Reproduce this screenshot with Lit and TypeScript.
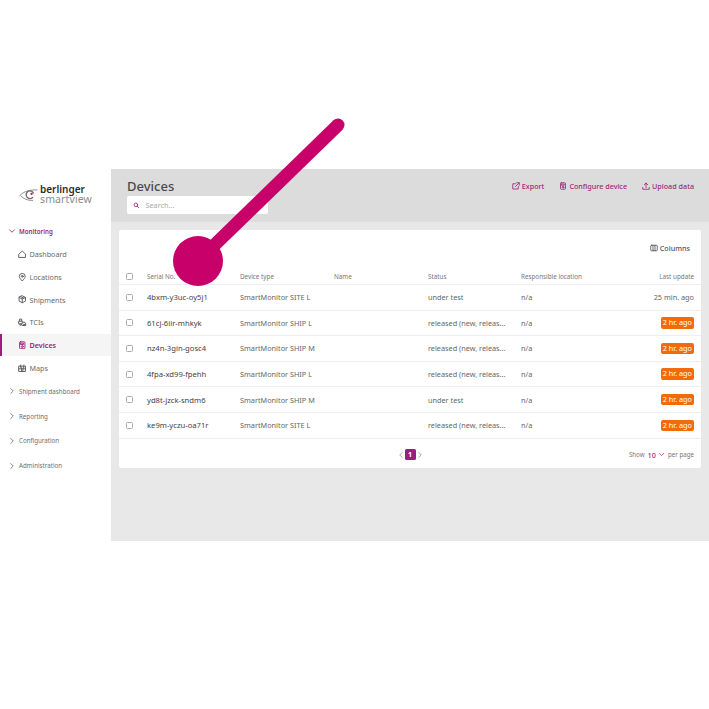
import { LitElement, html, css, svg } from "lit";
import { customElement } from "lit/decorators.js";

const ico = (p: unknown, s = 9, cls = "") => html`<svg class="ico ${cls}" width=${s} height=${s} viewBox="0 0 16 16" fill="none" stroke="currentColor" stroke-width="1.700" stroke-linecap="round" stroke-linejoin="round">${p}</svg>`;

const icons = {
  home: svg`<path d="M2 7.500 8 2l6 5.500V14H2z"/>`,
  pin: svg`<path d="M8 15C4.500 11 2.500 8.800 2.500 6.300a5.500 5.500 0 0 1 11 0C13.500 8.800 11.500 11 8 15z"/><circle cx="8" cy="6.300" r="1.800"/>`,
  box: svg`<path d="M8 1.500 14 4.500v7L8 14.500 2 11.500v-7zM2 4.500l6 3 6-3M8 7.500v7M5 3l6 3"/>`,
  tci: svg`<path d="M3 6V2h4v4M2 6h6v5H2zM9 8h4l1.500 3v3H8"/><circle cx="5" cy="12.500" r="1.500"/><circle cx="11.500" cy="13" r="1.500"/>`,
  device: svg`<rect x="3" y="1.500" width="10" height="13" rx="1.500"/><rect x="5.500" y="4" width="5" height="2.500"/><circle cx="8" cy="10.500" r="1.800"/>`,
  map: svg`<path d="M2 4h12v10H2zM5 2v4M11 2v4M2 9h12M6 6l1 8M10 6l-1 8"/>`,
  down: svg`<path d="M3 5.500 8 10.500l5-5"/>`,
  right: svg`<path d="M5.500 3 10.500 8l-5 5"/>`,
  left: svg`<path d="M10.500 3 5.500 8l5 5"/>`,
  search: svg`<circle cx="7" cy="7" r="4.500" stroke-width="2"/><path d="m10.500 10.500 3.500 3.500" stroke-width="2"/>`,
  export: svg`<path d="M12.500 9v5h-11V3.500H7M9.500 1.500h5v5M14.500 1.500 7 9"/>`,
  upload: svg`<path d="M8 11V2M4.500 5.500 8 2l3.500 3.500M1.500 11v3.500h13V11"/>`,
  columns: svg`<rect x="1.500" y="2.500" width="13" height="11" rx="1.500"/><path d="M6 2.500v11M10 2.500v11"/>`,
};

type Row = [string, string, string, boolean];
const rows: Row[] = [
  ["4bxm-y3uc-oy5j1", "SmartMonitor SITE L", "under test", false],
  ["61cj-6iir-mhkyk", "SmartMonitor SHIP L", "released (new, releas...", true],
  ["nz4n-3gin-gosc4", "SmartMonitor SHIP M", "released (new, releas...", true],
  ["4fpa-xd99-fpehh", "SmartMonitor SHIP L", "released (new, releas...", true],
  ["yd8t-jzck-sndm6", "SmartMonitor SHIP M", "under test", true],
  ["ke9m-yczu-oa71r", "SmartMonitor SITE L", "released (new, releas...", true],
];

const subItems: [string, unknown, boolean][] = [
  ["Dashboard", icons.home, false],
  ["Locations", icons.pin, false],
  ["Shipments", icons.box, false],
  ["TCIs", icons.tci, false],
  ["Devices", icons.device, true],
  ["Maps", icons.map, false],
];

@customElement("app-root")
export class AppRoot extends LitElement {
  static styles = css`
    :host { display: block; position: relative; width: 709px; height: 709px; overflow: hidden; background: #fff;
      font-family: "Noto Sans", "Open Sans", sans-serif; color: #666; font-size: 7.300px; }
    .ico { display: block; flex: none; }
    .shell { margin-top: 169px; height: 372px; display: flex; }
    .side { width: 111px; flex: none; background: #fff; display: flex; flex-direction: column; }
    .logo { height: 50px; box-sizing: border-box; display: flex; align-items: center; gap: 1px; padding: 1px 0 0 19px; }
    .logo-text { display: flex; flex-direction: column; line-height: 9.500px; }
    .logo-b { font-size: 10px; font-weight: 600; color: #2c2c2c; }
    .logo-s { font-size: 10.500px; color: #8c8c8c; letter-spacing: .12px; font-weight: 400; }
    nav { display: flex; flex-direction: column; }
    .group { height: 24.700px; display: flex; align-items: center; gap: 3px; padding-left: 8px; font-size: 6.200px; color: #6e6e6e; }
    .group.first { height: 24px; color: #a8206f; font-weight: 600; }
    .item { height: 22.700px; display: flex; align-items: center; gap: 3px; padding-left: 18px; font-size: 7.200px; color: #6a6a6a; box-sizing: border-box; }
    .item .ico { color: #555; }
    .item.on { background: #f5f5f5; color: #a01c78; font-weight: 600; border-left: 2px solid #a01c78; padding-left: 16px; }
    .item.on .ico { color: #a01c78; }
    main { flex: 1; min-width: 0; background: #e8e8e8; display: flex; flex-direction: column; }
    header { height: 53px; background: #dcdcdc; padding: 9px 15px 0 16px; display: flex; justify-content: space-between; box-sizing: border-box; }
    h1 { margin: 0; font-size: 13px; font-weight: 500; line-height: 17px; color: #4a4a4a; }
    .search { margin-top: 1px; width: 141px; height: 18px; background: #fff; border-radius: 2px; display: flex; align-items: center; gap: 6px; padding-left: 6px; box-sizing: border-box; color: #a8a8a8; font-size: 7.300px; }
    .search .ico { color: #a01c78; }
    .actions { display: flex; gap: 15px; height: 16px; align-items: center; color: #a0287c; font-size: 7.200px; font-weight: 500; }
    .act { display: flex; align-items: center; gap: 2px; }
    .card { margin: 8px 8px 0 8px; height: 238px; background: #fff; border-radius: 2px; display: flex; flex-direction: column; }
    .tools { height: 36px; display: flex; justify-content: flex-end; align-items: center; padding-right: 11px; color: #555; font-weight: 500; font-size: 7.200px; }
    .tools .in { display: flex; align-items: center; gap: 2px; height: 12px; }
    .head, .row { display: grid; grid-template-columns: 28px 93px 94px 94px 93px 100px 1fr; align-items: center; padding-right: 7px; }
    .head { height: 19px; padding-top: 3px; box-sizing: border-box; font-size: 6.300px; color: #777; border-bottom: 1px solid #eee; }
    .row { height: 25.600px; border-bottom: 1px solid #eee; box-sizing: border-box; }
    .cb { width: 5px; height: 5px; border: 1px solid #aaa; border-radius: 1.500px; background: #fff; margin-left: 7px; }
    .serial { color: #3f3f3f; font-size: 7.650px; }
    .end { justify-self: end; }
    .badge { background: #f26b0a; color: #fff; border-radius: 2px; height: 11.500px; line-height: 11.500px; padding: 0 2px; }
    .foot { flex: 1; display: grid; grid-template-columns: 1fr auto 1fr; align-items: center; padding: 3px 7px 0 7px; }
    .pager { grid-column: 2; display: flex; align-items: center; color: #999; }
    .page { width: 11px; height: 11px; background: #98207a; color: #fff; font-weight: 700; border-radius: 1.500px; text-align: center; line-height: 11px; font-size: 7px; }
    .per { justify-self: end; display: flex; align-items: center; gap: 3px; font-size: 6.200px; color: #777; }
    .per b { font-weight: 500; color: #a8287c; font-size: 7.300px; display: flex; align-items: center; gap: 2px; }
    .pointer { position: absolute; inset: 0; pointer-events: none; }
  `;

  render() {
    return html`
      <div class="shell">
        <aside class="side">
          <div class="logo">
            <svg width="20" height="17" viewBox="0 0 22 17" fill="none">
              <path d="M1 9.500C5 5.500 11 3 20 3.500M2 10c3 3 8 5.500 13 5" stroke="#8d8d8d" stroke-width="1.100" stroke-linecap="round"/>
              <path d="M15.800 6.800A4.200 4.200 0 1 0 15 11.800" stroke="#6d6d6d" stroke-width="1.500" stroke-linecap="round"/>
              <circle cx="13.800" cy="7.800" r="1.300" fill="#d0106e"/>
            </svg>
            <div class="logo-text"><span class="logo-b">berlinger</span><span class="logo-s">smartview</span></div>
          </div>
          <nav>
            <div class="group first">${ico(icons.down, 8)}<span>Monitoring</span></div>
            ${subItems.map(([t, i, on]) => html`<div class="item ${on ? "on" : ""}">${ico(i, 8.500)}<span>${t}</span></div>`)}
            ${["Shipment dashboard", "Reporting", "Configuration", "Administration"].map(
              (t) => html`<div class="group">${ico(icons.right, 8)}<span>${t}</span></div>`
            )}
          </nav>
        </aside>
        <main>
          <header>
            <div>
              <h1>Devices</h1>
              <div class="search">${ico(icons.search, 6.500)}<span>Search...</span></div>
            </div>
            <div class="actions">
              <span class="act">${ico(icons.export, 8)}Export</span>
              <span class="act">${ico(icons.device, 8)}Configure device</span>
              <span class="act">${ico(icons.upload, 8)}Upload data</span>
            </div>
          </header>
          <section class="card">
            <div class="tools"><span class="in">${ico(icons.columns, 8)}Columns</span></div>
            <div class="head">
              <div class="cb"></div><span>Serial No.</span><span>Device type</span><span>Name</span><span>Status</span><span>Responsible location</span><span class="end">Last update</span>
            </div>
            ${rows.map(
              ([s, d, st, b]) => html`<div class="row">
                <div class="cb"></div><span class="serial">${s}</span><span>${d}</span><span></span><span>${st}</span><span>n/a</span>
                <span class="end ${b ? "badge" : ""}">${b ? "2 hr. ago" : "25 min. ago"}</span>
              </div>`
            )}
            <div class="foot">
              <div class="pager">${ico(icons.left, 8)}<span class="page">1</span>${ico(icons.right, 8)}</div>
              <div class="per">Show <b>10 ${ico(icons.down, 7)}</b> per page</div>
            </div>
          </section>
        </main>
      </div>
      <svg class="pointer" width="709" height="709" viewBox="0 0 709 709">
        <path d="M338 125 198 261" stroke="#c8006a" stroke-width="13" stroke-linecap="round"/>
        <circle cx="198" cy="261" r="25" fill="#c8006a"/>
      </svg>
    `;
  }
}
